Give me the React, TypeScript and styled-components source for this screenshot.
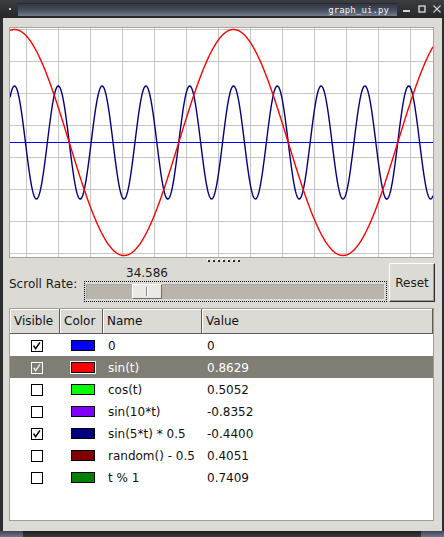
import React from "react";
import styled, { createGlobalStyle } from "styled-components";

const GlobalStyle = createGlobalStyle`
  html, body { margin: 0; padding: 0; background: #2a2b2d; }
  body { font-family: "DejaVu Sans", "Liberation Sans", sans-serif; }
  #root { width: 444px; height: 537px; }
`;

const Window = styled.div`
  width: 444px;
  height: 537px;
  display: flex;
  flex-direction: column;
  background: #2c2d2f;
  overflow: hidden;
`;

const TitleBar = styled.div`
  height: 18px;
  flex: none;
  display: flex;
  align-items: center;
  box-sizing: border-box;
  padding-left: 9px;
  background: linear-gradient(#3b3d40, #262729);
`;

const MenuDot = styled.div`
  width: 2px;
  height: 2px;
  background: #cfcfcf;
  margin-right: 7px;
`;

const TitleField = styled.div`
  width: 379px;
  height: 13px;
  box-sizing: border-box;
  display: flex;
  align-items: center;
  justify-content: flex-end;
  padding-right: 8px;
  background: linear-gradient(#2f3541, #4a5160 55%, #737c8f);
  border-top: 1px solid #262a31;
  color: #f4f4f4;
  font-family: "DejaVu Sans Mono", "Liberation Mono", monospace;
  font-size: 9px;
  letter-spacing: 0.1px;
`;

const WinButtons = styled.div`
  display: flex;
  align-items: center;
  padding-left: 6px;
  gap: 7px;
`;

const WinIcon = styled.svg`
  display: block;
  width: 8px;
  height: 8px;
`;

const Body = styled.div`
  flex: 1;
  min-height: 0;
  display: flex;
  flex-direction: column;
  margin: 0 2px 0 3px;
  padding: 9px 7px 10px 6px;
  box-sizing: border-box;
  background: #dcdad5;
`;

const PlotFrame = styled.div`
  height: 231px;
  flex: none;
  box-sizing: border-box;
  margin-right: 1px;
  border: 1px solid #a6a49e;
  background: #ffffff;
  svg { display: block; }
`;

const Splitter = styled.div`
  height: 6px;
  flex: none;
  display: flex;
  align-items: center;
  justify-content: center;
  gap: 3px;
  padding-left: 4px;
`;

const SplitDot = styled.div`
  width: 2px;
  height: 2px;
  background: #2a2a2a;
  box-shadow: -1px -1px 0 #ffffff;
`;

const ScrollRow = styled.div`
  height: 38px;
  flex: none;
  display: grid;
  grid-template-columns: 73px 1fr 46px;
  grid-template-rows: 17px 21px;
  column-gap: 2px;
  font-size: 12px;
  color: #1a1a1a;
`;

const ScrollLabel = styled.div`
  grid-column: 1;
  grid-row: 1 / span 2;
  align-self: center;
  margin-top: 1px;
  white-space: nowrap;
`;

const ValueCell = styled.div`
  grid-column: 2;
  grid-row: 1;
  position: relative;
`;

const ValueText = styled.span`
  position: absolute;
  top: 50%;
  transform: translate(-50%, -50%);
  white-space: nowrap;
`;

const SliderFrame = styled.div`
  grid-column: 2;
  grid-row: 2;
  box-sizing: border-box;
  border: 1px dotted #000000;
  padding: 2px 2px 2px 1px;
`;

const Track = styled.div`
  position: relative;
  height: 100%;
  background: #b9b5ac;
  box-shadow: inset 1px 1px 0 #aaa69d;
`;

const Thumb = styled.div`
  position: absolute;
  top: 0;
  bottom: 0;
  width: 30px;
  box-sizing: border-box;
  background: #ebe9e5;
  border-style: solid;
  border-width: 1px;
  border-color: #ffffff #6e6c67 #6e6c67 #ffffff;
  &::after {
    content: "";
    position: absolute;
    left: 13px;
    top: 2px;
    bottom: 2px;
    width: 1px;
    background: #8a8780;
    box-shadow: 1px 0 0 #ffffff;
  }
`;

const ResetButton = styled.button`
  grid-column: 3;
  grid-row: 1 / span 2;
  margin: -1px 0 0 0;
  padding: 0;
  box-sizing: border-box;
  background: #dcdad5;
  border-style: solid;
  border-width: 1px;
  border-color: #ffffff #2f2e2b #2f2e2b #ffffff;
  box-shadow: inset -1px -1px 0 #9d9a93;
  font-family: "DejaVu Sans", "Liberation Sans", sans-serif;
  font-size: 12px;
  color: #1a1a1a;
`;

const TableFrame = styled.div`
  flex: 1;
  min-height: 0;
  margin: 6px 1px 0 0;
  box-sizing: border-box;
  border: 1px solid #a09e98;
  background: #ffffff;
  display: flex;
  flex-direction: column;
  font-size: 12px;
`;

const HeaderRow = styled.div`
  display: grid;
  grid-template-columns: 50px 43px 99px 1fr;
  height: 25px;
  flex: none;
`;

const HeaderCell = styled.div`
  box-sizing: border-box;
  display: flex;
  align-items: center;
  padding-left: 4px;
  background: #dcdad5;
  border-right: 1px solid #5f5d58;
  border-bottom: 1px solid #5f5d58;
  box-shadow: inset 1px 1px 0 #ffffff;
  color: #111111;
`;

const DataRow = styled.div<{ $selected?: boolean }>`
  display: grid;
  grid-template-columns: 50px 43px 99px 1fr;
  height: 22px;
  flex: none;
  align-items: center;
  background: ${(p) => (p.$selected ? "#807d74" : "transparent")};
  color: ${(p) => (p.$selected ? "#ffffff" : "#111111")};
`;

const CheckCell = styled.div`
  padding: 1px 0 0 21px;
  display: flex;
`;

const SwatchCell = styled.div`
  padding-left: 11px;
  display: flex;
`;

const Swatch = styled.div<{ $color: string; $selected?: boolean }>`
  width: 24px;
  height: 11px;
  box-sizing: border-box;
  border: 1px solid #000000;
  background: ${(p) => p.$color};
  box-shadow: ${(p) => (p.$selected ? "0 0 0 1px #ffffff" : "none")};
`;

const TextCell = styled.div`
  padding: 1px 0 0 5px;
  white-space: nowrap;
`;

const CheckSvg = styled.svg`
  display: block;
  width: 12px;
  height: 12px;
`;

const BottomFrame = styled.div`
  height: 6px;
  flex: none;
  display: flex;
  background: linear-gradient(#1b1c1d, #3c3d40);
`;

const Grip = styled.div`
  width: 23px;
  background: linear-gradient(#3f4552, #6d7688);
`;

const Spacer = styled.div`
  flex: 1;
`;

type Series = {
  name: string;
  value: string;
  color: string;
  visible: boolean;
  selected?: boolean;
};

const SERIES: Series[] = [
  { name: "0", value: "0", color: "#0000ff", visible: true },
  { name: "sin(t)", value: "0.8629", color: "#ff0000", visible: true, selected: true },
  { name: "cos(t)", value: "0.5052", color: "#00ff00", visible: false },
  { name: "sin(10*t)", value: "-0.8352", color: "#7f00ff", visible: false },
  { name: "sin(5*t) * 0.5", value: "-0.4400", color: "#000080", visible: true },
  { name: "random() - 0.5", value: "0.4051", color: "#800000", visible: false },
  { name: "t % 1", value: "0.7409", color: "#008000", visible: false },
];

const PW = 423;
const PH = 229;

function curve(f: (t: number) => number): string {
  const pts: string[] = [];
  for (let lx = 0; lx <= PW; lx += 0.5) {
    const xa = lx + 10;
    const t = Math.PI / 2 + ((xa - 14.5) * 2 * Math.PI) / 219;
    const ly = 114.5 - 113 * f(t);
    pts.push(`${lx.toFixed(1)},${ly.toFixed(2)}`);
  }
  return pts.join(" ");
}

const Plot: React.FC = () => {
  const vLines = Array.from({ length: 13 }, (_, k) => 16.5 + 32 * k);
  const hLines = Array.from({ length: 8 }, (_, k) => 1.5 + 32 * k);
  return (
    <PlotFrame>
      <svg width={PW} height={PH} viewBox={`0 0 ${PW} ${PH}`}>
        {vLines.map((x) => (
          <line key={`v${x}`} x1={x} y1={0} x2={x} y2={PH} stroke="#c6c6c6" strokeWidth={1} />
        ))}
        {hLines.map((y) => (
          <line key={`h${y}`} x1={0} y1={y} x2={PW} y2={y} stroke="#c6c6c6" strokeWidth={1} />
        ))}
        <line x1={0} y1={114.5} x2={PW} y2={114.5} stroke="#0000ff" strokeWidth={1} />
        <polyline points={curve((t) => 0.5 * Math.sin(5 * t))} fill="none" stroke="#000080" strokeWidth={1.4} />
        <polyline points={curve((t) => Math.sin(t))} fill="none" stroke="#ff0000" strokeWidth={1.4} />
      </svg>
    </PlotFrame>
  );
};

const CheckBox: React.FC<{ checked: boolean; selected?: boolean }> = ({ checked, selected }) => {
  const c = selected ? "#ffffff" : "#000000";
  return (
    <CheckSvg viewBox="0 0 12 12">
      <rect x={0.5} y={0.5} width={11} height={11} fill={selected ? "none" : "#ffffff"} stroke={c} strokeWidth={1} />
      {checked && (
        <polyline points="2.6,5.6 4.6,8.6 9,2.4" fill="none" stroke={selected ? "#e8e8e8" : "#000000"} strokeWidth={1.5} />
      )}
    </CheckSvg>
  );
};

export default function App() {
  const thumbLeft = 46; // px within track
  const labelLeft = 1 + 1 + thumbLeft + 15;
  return (
    <>
      <GlobalStyle />
      <Window>
        <TitleBar>
          <MenuDot />
          <TitleField>graph_ui.py</TitleField>
          <WinButtons>
            <WinIcon viewBox="0 0 8 8">
              <rect x={0} y={5} width={7} height={2} fill="#d4d4d4" />
            </WinIcon>
            <WinIcon viewBox="0 0 8 8">
              <rect x={1} y={1} width={6} height={6} fill="none" stroke="#d4d4d4" strokeWidth={1.4} />
            </WinIcon>
            <WinIcon viewBox="0 0 8 8">
              <path d="M0.5 0.5 L7.5 7.5 M7.5 0.5 L0.5 7.5" stroke="#d4d4d4" strokeWidth={1.1} />
            </WinIcon>
          </WinButtons>
        </TitleBar>
        <Body>
          <Plot />
          <Splitter>
            {Array.from({ length: 7 }, (_, i) => (
              <SplitDot key={i} />
            ))}
          </Splitter>
          <ScrollRow>
            <ScrollLabel>Scroll Rate:</ScrollLabel>
            <ValueCell>
              <ValueText style={{ left: `${labelLeft}px` }}>34.586</ValueText>
            </ValueCell>
            <SliderFrame>
              <Track>
                <Thumb style={{ left: `${thumbLeft}px` }} />
              </Track>
            </SliderFrame>
            <ResetButton>Reset</ResetButton>
          </ScrollRow>
          <TableFrame>
            <HeaderRow>
              <HeaderCell>Visible</HeaderCell>
              <HeaderCell>Color</HeaderCell>
              <HeaderCell>Name</HeaderCell>
              <HeaderCell>Value</HeaderCell>
            </HeaderRow>
            {SERIES.map((s) => (
              <DataRow key={s.name} $selected={s.selected}>
                <CheckCell>
                  <CheckBox checked={s.visible} selected={s.selected} />
                </CheckCell>
                <SwatchCell>
                  <Swatch $color={s.color} $selected={s.selected} />
                </SwatchCell>
                <TextCell>{s.name}</TextCell>
                <TextCell>{s.value}</TextCell>
              </DataRow>
            ))}
          </TableFrame>
        </Body>
        <BottomFrame>
          <Grip />
          <Spacer />
          <Grip />
        </BottomFrame>
      </Window>
    </>
  );
}
